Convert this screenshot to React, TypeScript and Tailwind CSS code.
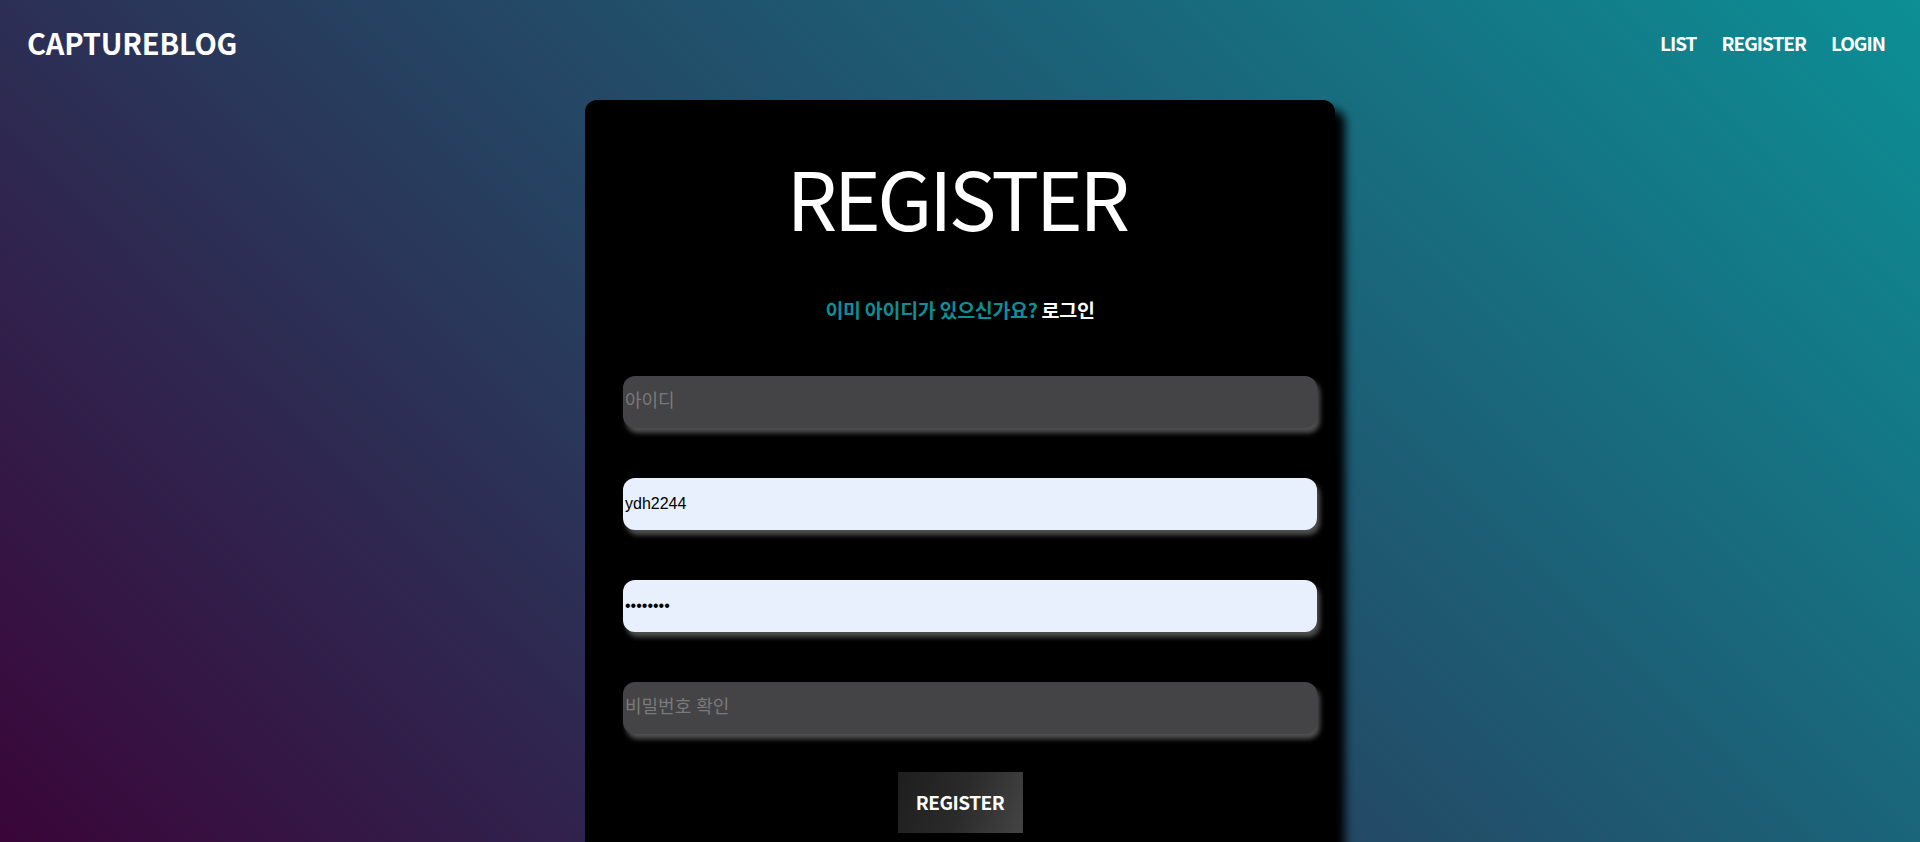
import React from "react";

const cjk = "font-['Noto_Sans_CJK_KR','Noto_Sans_KR',sans-serif]";

export default function App() {
  return (
    <div
      className={`h-[842px] w-full overflow-hidden bg-[linear-gradient(45deg,#3a0539,#0c8f95)] ${cjk}`}
    >
      <header className="flex h-[85px] items-center justify-between pl-[27px] pr-[35px] text-white">
        <div className="text-[29px] font-semibold leading-none tracking-[-0.2px]">CAPTUREBLOG</div>
        <nav className="flex items-center gap-[25px] text-[19px] font-bold leading-none tracking-[-1px]">
          <span>LIST</span>
          <span>REGISTER</span>
          <span>LOGIN</span>
        </nav>
      </header>
      <main className="mt-[15px] flex justify-center">
        <div className="h-[760px] w-[750px] rounded-[12px] bg-black pl-[38px] pr-[18px] shadow-[10px_10px_10px_#000]">
          <h1 className="pt-[56px] pr-[27px] text-center text-[80px] font-normal leading-none tracking-[-3.5px] text-white">
            REGISTER
          </h1>
          <p className="mt-[64px] pr-[20px] text-center text-[19.5px] font-bold leading-none tracking-[-0.3px]">
            <span className="text-[#0c8f96]">이미 아이디가 있으신가요? </span>
            <span className="text-white">로그인</span>
          </p>
          <form className="mt-[56px] flex flex-col gap-[50px]">
            <input
              type="text"
              placeholder="아이디"
              className="h-[52px] w-[694px] rounded-[12px] bg-[#444446] pl-[2px] font-['Liberation_Sans','Noto_Sans_CJK_KR',sans-serif] text-[16px] text-black outline-none shadow-[3px_5px_5px_#505050] placeholder:text-[18px] placeholder:text-[#7a7a7a]"
            />
            <input
              type="text"
              defaultValue="ydh2244"
              className="h-[52px] w-[694px] rounded-[12px] bg-[#e8f0fe] pl-[2px] font-['Liberation_Sans','Noto_Sans_CJK_KR',sans-serif] text-[16px] text-black outline-none shadow-[3px_5px_5px_#505050]"
            />
            <input
              type="password"
              defaultValue="ydh2244!"
              className="h-[52px] w-[694px] rounded-[12px] bg-[#e8f0fe] pl-[2px] font-['Liberation_Sans','Noto_Sans_CJK_KR',sans-serif] text-[16px] text-black outline-none shadow-[3px_5px_5px_#505050]"
            />
            <input
              type="password"
              placeholder="비밀번호 확인"
              className="h-[52px] w-[694px] rounded-[12px] bg-[#444446] pl-[2px] font-['Liberation_Sans','Noto_Sans_CJK_KR',sans-serif] text-[16px] text-black outline-none shadow-[3px_5px_5px_#505050] placeholder:text-[18px] placeholder:text-[#7a7a7a]"
            />
          </form>
          <div className="mt-[38px] flex justify-center pr-[20px]">
            <button
              type="button"
              className="h-[61px] w-[125px] bg-[linear-gradient(110deg,#1e1e1e_0%,#2a2a2a_50%,#444_100%)] text-[19px] font-bold tracking-[-0.5px] text-white"
            >
              REGISTER
            </button>
          </div>
        </div>
      </main>
    </div>
  );
}
